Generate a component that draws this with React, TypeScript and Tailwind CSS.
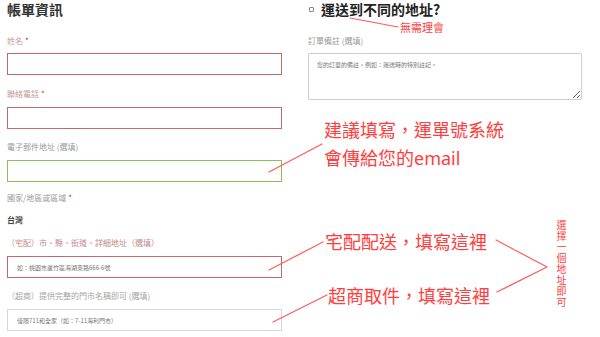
const CJK = "font-['Noto_Sans_CJK_TC','Liberation_Sans',sans-serif]";

function Label({ text, color, required, className }: { text: string; color: string; required?: boolean; className: string }) {
  return (
    <div className={`${className} h-[12px] text-[8px] leading-[12px] ${color}`}>
      {text}
      {required && <span className="ml-[2px] text-[#e01b1b]">*</span>}
    </div>
  );
}

function Field({ border, placeholder, className }: { border: string; placeholder?: string; className: string }) {
  return (
    <input
      className={`${className} block w-full h-[22px] border bg-white px-[9px] text-[6px] text-[#555] placeholder:text-[#777] outline-none ${border}`}
      placeholder={placeholder}
      readOnly
    />
  );
}

function Callouts() {
  return (
    <>
      <svg className="pointer-events-none absolute inset-0" width="600" height="337" viewBox="0 0 600 337">
        <g stroke="#ff5a5a" strokeWidth="1.2" fill="none" strokeLinecap="round" strokeLinejoin="round">
          <line x1="350" y1="18" x2="398" y2="27" />
          <line x1="322" y1="144" x2="269" y2="172" />
          <line x1="323" y1="242" x2="269" y2="270" />
          <line x1="327" y1="295" x2="273" y2="322" />
          <polyline points="496,240 547,267 497,292" />
        </g>
      </svg>
      <div className="absolute left-[400px] top-[20px] text-[11px] leading-[14px] text-[#ff3d3d]">無需理會</div>
      <div className="absolute left-[324px] top-[116px] text-[18px] leading-[28px] text-[#ff3d3d] font-['Noto_Sans','Noto_Sans_CJK_TC',sans-serif]">
        <div>建議填寫，運單號系統</div>
        <div>會傳給您的email</div>
      </div>
      <div className="absolute left-[325px] top-[227px] text-[18px] leading-[28px] text-[#ff3d3d]">宅配配送，填寫這裡</div>
      <div className="absolute left-[328px] top-[281px] text-[18px] leading-[28px] text-[#ff3d3d]">超商取件，填寫這裡</div>
      {/* vertical note */}
      <div className="absolute left-[555px] top-[220px] [writing-mode:vertical-rl] text-[10px] leading-[12px] tracking-[1px] text-[#ff3d3d]">
        選擇一個地址即可
      </div>
    </>
  );
}

export default function App() {
  return (
    <div className={`relative w-[600px] h-[337px] overflow-hidden bg-white ${CJK}`}>
      <div className="flex gap-[26px] px-[7px]">
        {/* billing */}
        <div className="w-[275px] flex flex-col">
          <h3 className="h-[18px] text-[14px] leading-[18px] font-bold text-[#333]">帳單資訊</h3>
          <Label className="mt-[17px]" text="姓名" color="text-[#c79a9a]" required />
          <Field className="mt-[6px]" border="border-[#c46a6a]" />
          <Label className="mt-[13px]" text="聯絡電話" color="text-[#c79a9a]" required />
          <Field className="mt-[7px]" border="border-[#c46a6a]" />
          <Label className="mt-[12px]" text="電子郵件地址 (選填)" color="text-[#9a9a9a]" />
          <Field className="mt-[7px]" border="border-[#8cbf5e]" />
          <Label className="mt-[10px]" text="國家/地區或區域" color="text-[#9a9a9a]" required />
          <div className="mt-[10px] h-[12px] text-[8px] leading-[12px] font-bold text-[#444]">台灣</div>
          <Label className="mt-[11px]" text="（宅配）市、縣、街道、詳細地址（選填）" color="text-[#c48a8a]" />
          <Field className="mt-[7px]" border="border-[#c46a6a]" placeholder="如：桃園市蘆竹區海湖東路666-6號" />
          <Label className="mt-[12px]" text="（超商）提供完整的門市名稱即可 (選填)" color="text-[#a5a5a5]" />
          <Field className="mt-[7px]" border="border-[#d6d6d6]" placeholder="僅限711和全家（如：7-11海利門市）" />
        </div>

        {/* shipping */}
        <div className="w-[274px] flex flex-col">
          <div className="h-[18px] flex items-center gap-[7px]">
            <span className="ml-[1px] w-[5px] h-[5px] border border-[#888] rounded-[1px]" />
            <h3 className="text-[14px] leading-[18px] font-bold text-[#222]">運送到不同的地址?</h3>
          </div>
          <Label className="mt-[17px]" text="訂單備註 (選填)" color="text-[#9a9a9a]" />
          <textarea
            className="mt-[6px] block w-full h-[47px] border border-[#cfcfcf] rounded-[2px] px-[8px] pt-[6px] text-[6px] leading-[9px] placeholder:text-[#777] outline-none shadow-[0_0_1px_rgba(0,0,0,0.1)]"
            placeholder="您的訂單的備註，例如：運送時的特別註記。"
            readOnly
          />
        </div>
      </div>
      <Callouts />
    </div>
  );
}
